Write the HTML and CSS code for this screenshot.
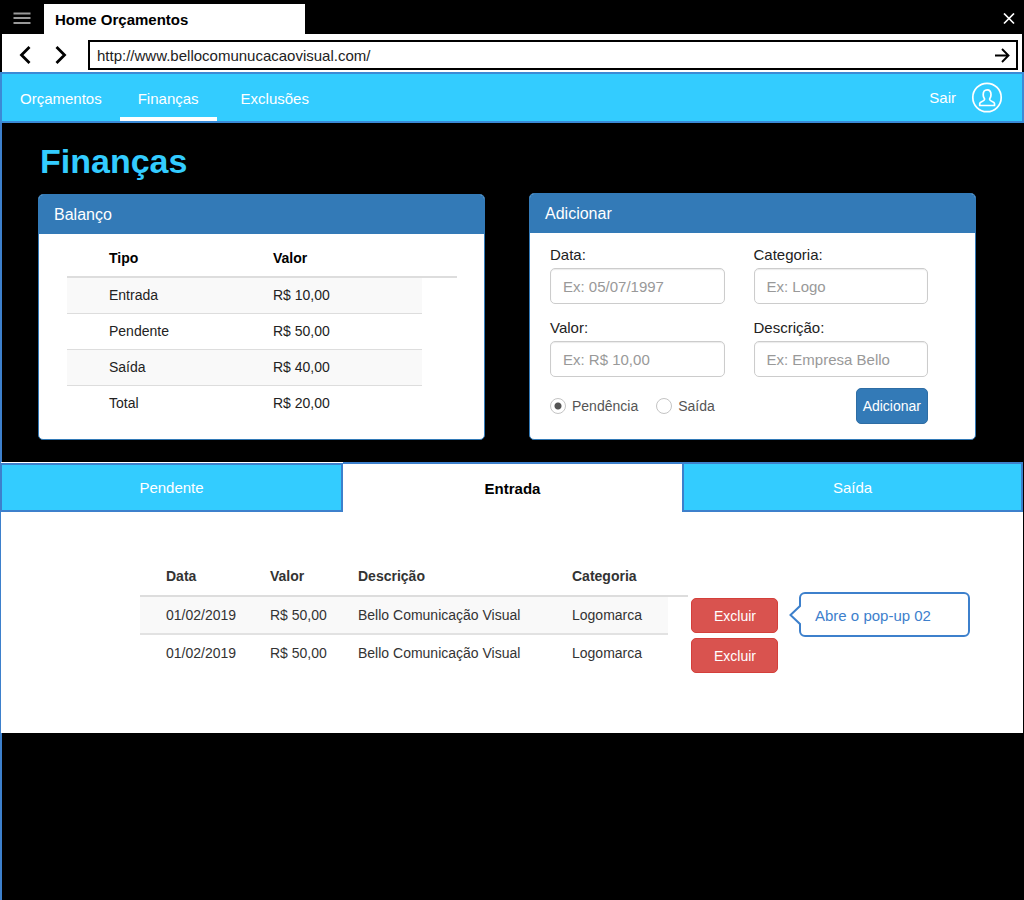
FILE: index.html
```html
<!DOCTYPE html>
<html lang="pt-BR">
<head>
<meta charset="utf-8">
<meta name="viewport" content="width=device-width, initial-scale=1">
<title>Home Orçamentos</title>
<link rel="stylesheet" href="styles.css">
</head>
<body>
<header class="titlebar">
  <button class="icon-btn menu-btn" type="button" aria-label="Menu">
    <svg width="18" height="14" viewBox="0 0 18 14"><path d="M0.500 1.500h17M0.500 6h17M0.500 11h17" stroke="#999" stroke-width="1.800"/></svg>
  </button>
  <div class="window-tab">Home Orçamentos</div>
  <button class="icon-btn close-btn" type="button" aria-label="Fechar">
    <svg width="12" height="12" viewBox="0 0 12 12"><path d="M1 0.500l10 10M11 0.500L1 10.500" stroke="#fff" stroke-width="1.700"/></svg>
  </button>
</header>

<div class="toolbar">
  <button class="icon-btn" type="button" aria-label="Voltar">
    <svg width="12" height="18" viewBox="0 0 12 18"><path d="M10.500 1L2.500 9l8 8" fill="none" stroke="#000" stroke-width="2.800"/></svg>
  </button>
  <button class="icon-btn" type="button" aria-label="Avançar">
    <svg width="12" height="18" viewBox="0 0 12 18"><path d="M1.500 1L9.500 9l-8 8" fill="none" stroke="#000" stroke-width="2.800"/></svg>
  </button>
  <form class="address">
    <input class="address-input" type="text" aria-label="Endereço" value="http://www.bellocomunucacaovisual.com/">
    <button class="icon-btn" type="button" aria-label="Ir">
      <svg width="16" height="16" viewBox="0 0 16 16"><path d="M1 7.500h13.500M8 1l6.500 6.500L8 14" fill="none" stroke="#000" stroke-width="1.900"/></svg>
    </button>
  </form>
</div>

<nav class="nav">
  <a class="nav-link" href="#orcamentos">Orçamentos</a>
  <a class="nav-link nav-link-active" href="#financas" aria-current="page">Finanças</a>
  <a class="nav-link nav-link-last" href="#exclusoes">Exclusões</a>
  <a class="logout" href="#sair">Sair
    <svg width="32" height="32" viewBox="0 0 32 32" fill="none" stroke="#fff" stroke-width="1.700">
      <circle cx="16" cy="15.500" r="14.200"/>
      <path d="M8.700 23.500v-1.900c0-2.100 4.900-2.100 4.900-4.300 0-1-1.400-1.700-1.400-4.600 0-3.200 1.400-4.900 3.900-4.900s3.900 1.700 3.900 4.900c0 2.900-1.400 3.600-1.400 4.600 0 2.200 4.900 2.200 4.900 4.300v1.900z" stroke-linejoin="round"/>
    </svg>
  </a>
</nav>

<main class="page">
  <h1 class="title">Finanças</h1>
  <div class="panels">
    <section class="panel">
      <h2 class="panel-head">Balanço</h2>
      <div class="balance">
        <table class="table balance-table">
          <colgroup><col class="col-index"><col class="col-type"><col class="col-value"><col></colgroup>
          <thead><tr><th></th><th>Tipo</th><th>Valor</th><th></th></tr></thead>
          <tbody>
            <tr><td></td><td>Entrada</td><td>R$ 10,00</td></tr>
            <tr><td></td><td>Pendente</td><td>R$ 50,00</td></tr>
            <tr><td></td><td>Saída</td><td>R$ 40,00</td></tr>
            <tr><td></td><td>Total</td><td>R$ 20,00</td></tr>
          </tbody>
        </table>
      </div>
    </section>

    <section class="panel">
      <h2 class="panel-head">Adicionar</h2>
      <form class="entry">
        <div class="fields">
          <div class="field"><label for="data">Data:</label><input class="text-input" id="data" type="text" placeholder="Ex: 05/07/1997"></div>
          <div class="field"><label for="categoria">Categoria:</label><input class="text-input" id="categoria" type="text" placeholder="Ex: Logo"></div>
          <div class="field"><label for="valor">Valor:</label><input class="text-input" id="valor" type="text" placeholder="Ex: R$ 10,00"></div>
          <div class="field"><label for="descricao">Descrição:</label><input class="text-input" id="descricao" type="text" placeholder="Ex: Empresa Bello"></div>
        </div>
        <div class="actions">
          <label class="choice"><input class="radio" type="radio" name="tipo" checked>Pendência</label>
          <label class="choice"><input class="radio" type="radio" name="tipo">Saída</label>
          <button class="btn btn-primary" type="button">Adicionar</button>
        </div>
      </form>
    </section>
  </div>

  <section class="records">
    <div class="tabs" role="tablist">
      <button class="tab tab-first" type="button" role="tab" aria-selected="false">Pendente</button>
      <button class="tab tab-active" type="button" role="tab" aria-selected="true">Entrada</button>
      <button class="tab" type="button" role="tab" aria-selected="false">Saída</button>
    </div>
    <div class="records-body" role="tabpanel">
      <table class="table records-table">
        <colgroup><col class="col-gutter"><col class="col-date"><col class="col-amount"><col class="col-text"><col class="col-date"><col></colgroup>
        <thead><tr><th></th><th>Data</th><th>Valor</th><th>Descrição</th><th>Categoria</th><th></th></tr></thead>
        <tbody>
          <tr><td></td><td>01/02/2019</td><td>R$ 50,00</td><td>Bello Comunicação Visual</td><td>Logomarca</td></tr>
          <tr><td></td><td>01/02/2019</td><td>R$ 50,00</td><td>Bello Comunicação Visual</td><td>Logomarca</td></tr>
        </tbody>
      </table>
      <div class="row-actions">
        <button class="btn btn-danger" type="button">Excluir</button>
        <button class="btn btn-danger" type="button">Excluir</button>
      </div>
      <div class="callout">Abre o pop-up 02
        <svg class="callout-tip" width="12" height="22" viewBox="0 0 12 22"><path d="M12 1L1.500 11 12 21" fill="#fff" stroke="#3d80cc" stroke-width="2"/></svg>
      </div>
    </div>
  </section>
</main>
</body>
</html>
```

FILE: styles.css
```css
* { box-sizing: border-box; }

body {
  margin: 0;
  min-height: 100vh;
  display: flex;
  flex-direction: column;
  background: #000;
  color: #333;
  font: 15px/20px "Liberation Sans", Arial, sans-serif;
}

button, input { font: inherit; }
svg { display: block; }

.icon-btn {
  padding: 0;
  border: 0;
  background: none;
  cursor: pointer;
}

/* Browser chrome */
.titlebar {
  display: flex;
  align-items: center;
  padding: 4px 9px 0 13px;
}
.menu-btn { margin-right: 13px; }
.window-tab {
  flex: 0 1 261px;
  padding: 6px 11px 4px;
  background: #fff;
  color: #000;
  font-weight: bold;
}
.close-btn { margin-left: auto; }

.toolbar {
  display: flex;
  align-items: center;
  gap: 24px;
  margin: 0 2px;
  padding: 6px 4px 2px 17px;
  background: #fff;
}
.address {
  flex: 1;
  display: flex;
  align-items: center;
  margin-left: -3px;
  padding: 4px 6px 2px 7px;
  border: 2px solid #000;
}
.address-input {
  flex: 1;
  min-width: 0;
  padding: 0;
  border: 0;
  outline: 0;
  color: #222;
}

/* Navigation */
.nav {
  display: flex;
  border: 2px solid #3b8ad6;
  padding-right: 19px;
  background: #33ccff;
}
.nav-link {
  padding: 15px 18px 8px;
  border-bottom: 4px solid transparent;
  color: #fff;
  text-decoration: none;
}
.nav-link-active { border-bottom-color: #fff; }
.nav-link-last { padding-left: 24px; }
.logout {
  display: flex;
  align-items: center;
  gap: 15px;
  margin-left: auto;
  color: #fff;
  text-decoration: none;
}

/* Page */
.page {
  flex: 1;
  border-left: 2px solid #3d80cc;
}
.title {
  margin: 0;
  padding: 18px 38px 12px;
  color: #33ccff;
  font-size: 34px;
  line-height: 40px;
}
.panels {
  display: grid;
  grid-template-columns: 1fr 1fr;
  align-items: end;
  gap: 44px;
  padding: 0 48px 22px 36px;
}
.panel {
  border: 1px solid #337ab7;
  border-radius: 5px;
  background: #fff;
  overflow: hidden;
}
.panel-head {
  margin: 0;
  padding: 10px 15px 9px;
  background: #337ab7;
  color: #fff;
  font-size: 16px;
  font-weight: normal;
}

/* Tables */
.table {
  border-spacing: 0;
  table-layout: fixed;
  font-size: 14px;
}
.table th { border-bottom: 2px solid #ddd; text-align: left; }
.table tbody tr:nth-child(odd) td { background: #f9f9f9; }

.balance { padding: 7px 27px 18px 28px; }
.balance-table { width: 100%; color: #222; }
.balance-table th { padding: 8px; line-height: 19px; color: #000; }
.balance-table td { padding: 9px 8px; line-height: 17px; }
.balance-table tr + tr td { border-top: 1px solid #ddd; }
.col-index { width: 34px; }
.col-type { width: 164px; }
.col-value { width: 157px; }

/* Entry form */
.entry { padding: 12px 47px 15px 20px; color: #222; }
.fields {
  display: grid;
  grid-template-columns: 1fr 1fr;
  gap: 14px 29px;
}
.field {
  display: flex;
  flex-direction: column;
  gap: 3px;
}
.text-input {
  width: 100%;
  padding: 8px 12px 6px;
  border: 1px solid #ccc;
  border-radius: 5px;
  background: #fff;
  box-shadow: inset 0 1px 1px rgba(0, 0, 0, 0.08);
}
.text-input::placeholder { color: #999; opacity: 1; }
.actions {
  display: flex;
  align-items: center;
  gap: 18px;
  margin-top: 11px;
}
.choice {
  display: flex;
  align-items: center;
  gap: 6px;
  color: #555;
  font-size: 14px;
}
.radio {
  appearance: none;
  width: 16px;
  height: 16px;
  margin: 0;
  border: 1px solid #c4c4c4;
  border-radius: 50%;
}
.radio:checked { background: radial-gradient(circle, #555 3px, #fff 4px); }

.btn {
  border: 1px solid;
  border-radius: 5px;
  color: #fff;
  font-size: 14px;
  cursor: pointer;
}
.btn-primary {
  margin-left: auto;
  padding: 7px 6px;
  border-color: #2e6da4;
  background: #337ab7;
}
.btn-danger {
  padding: 7px 21px 6px 22px;
  border-color: #d43f3a;
  background: #d9534f;
}

/* Records */
.records {
  margin: 0 1px 0 -1px;
  background: #fff;
}
.tabs {
  display: grid;
  grid-template-columns: 342fr 339fr 341fr;
}
.tab {
  padding: 13px 10px 12px;
  border: 2px solid #3d80cc;
  background: #33ccff;
  color: #fff;
  cursor: pointer;
}
.tab-first {
  margin-top: 1px;
  border-left-width: 1px;
}
.tab-active {
  border-width: 2px 0 0;
  background: #fff;
  color: #000;
  font-weight: bold;
}
.records-body {
  display: flex;
  align-items: flex-start;
  padding: 45px 53px 60px 139px;
}
.records-table { flex: 0 0 548px; }
.records-table th { padding: 9px 8px; }
.records-table td { padding: 8px; }
.records-table tr:nth-child(odd) td { border-bottom: 2px solid #e2e2e2; }
.col-gutter { width: 18px; }
.col-date { width: 104px; }
.col-amount { width: 88px; }
.col-text { width: 214px; }
.row-actions {
  display: flex;
  flex-direction: column;
  gap: 5px;
  margin: 41px 21px 0 3px;
}
.callout {
  position: relative;
  flex: 0 1 171px;
  margin-top: 35px;
  padding: 12px 14px 9px;
  border: 2px solid #3d80cc;
  border-radius: 6px;
  color: #3d80cc;
}
.callout-tip {
  position: absolute;
  top: 10px;
  left: -12px;
}
```
